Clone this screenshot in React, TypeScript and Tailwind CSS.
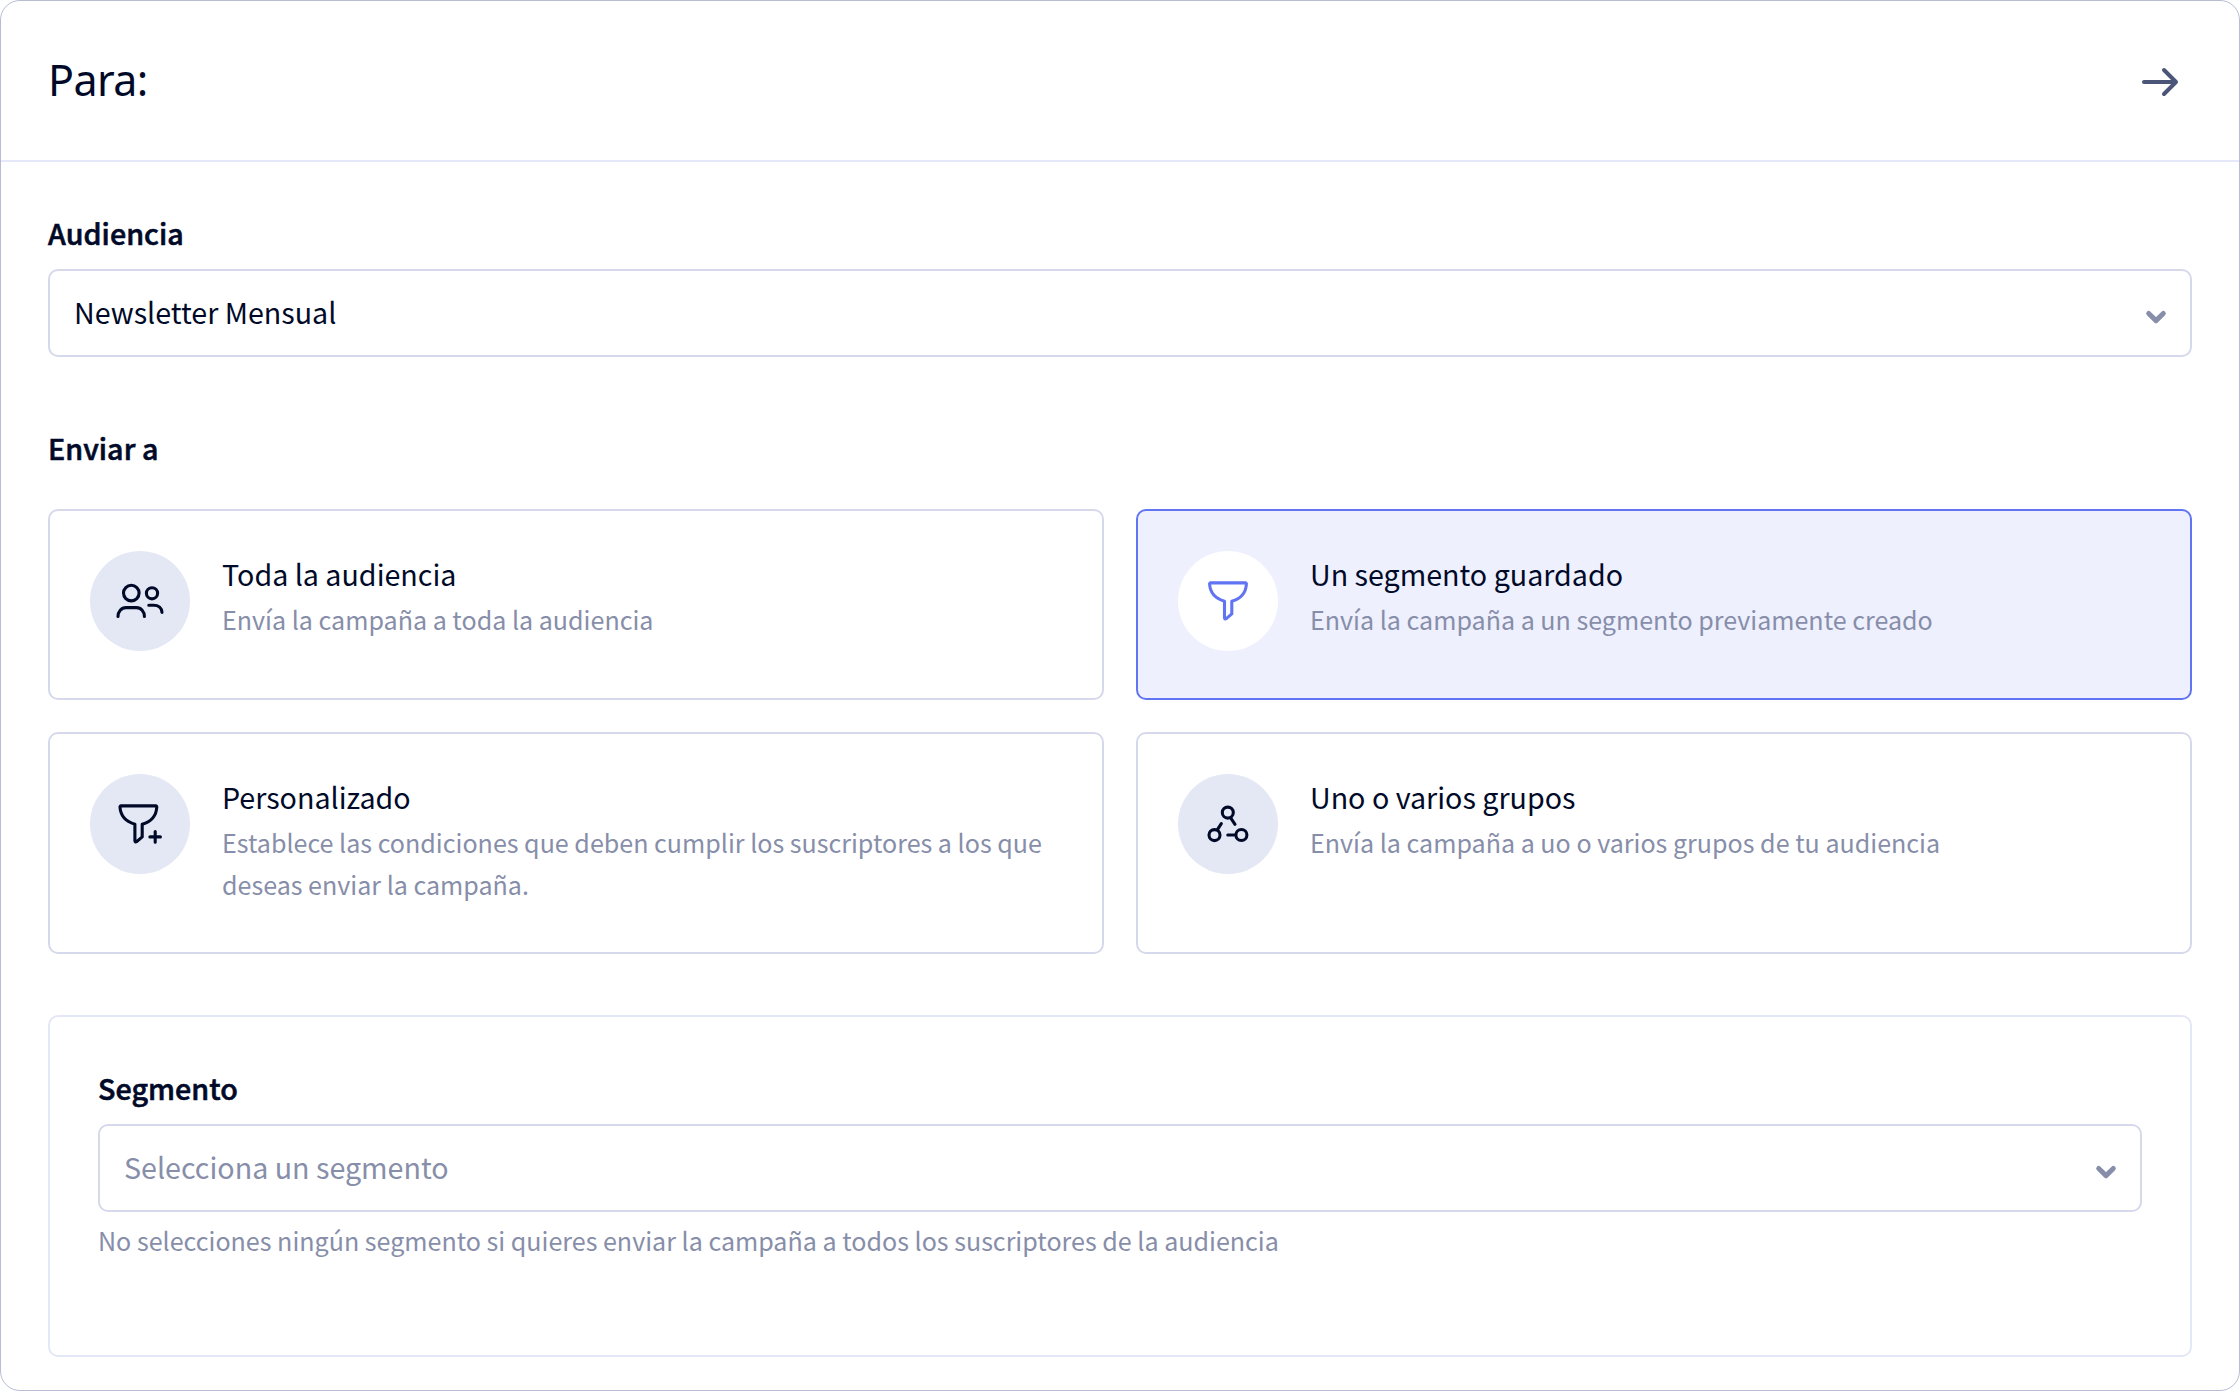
import type { ReactNode } from "react";
import clsx from "clsx";

function IconFrame({ viewBox, children }: { viewBox: string; children: ReactNode }) {
  return (
    <svg
      viewBox={viewBox}
      className="size-full"
      fill="none"
      stroke="currentColor"
      strokeWidth="3.1"
      strokeLinecap="round"
      strokeLinejoin="round"
      aria-hidden="true"
    >
      {children}
    </svg>
  );
}

const funnelPath =
  "M20.6 12.9H55.4Q56.5 12.9 56.4 14C55.9 22.5 50.5 28.8 41.8 31.3V43.9L36.3 48.7Q34.5 49.6 34.5 47.8V31.3C25.5 28.5 20 22.5 19.6 14Q19.5 12.9 20.6 12.9Z";

function UsersIcon() {
  return (
    <IconFrame viewBox="-10 -19 100 100">
      <circle cx="31.3" cy="23.1" r="7.8" />
      <circle cx="52" cy="23.3" r="5.6" />
      <path d="M18 46.5C18 41.5 21.3 37.6 26 37.6H36.4C41.1 37.6 44.4 41.5 44.4 46.5" />
      <path d="M48.8 35.2H53.6C58.6 35.2 61.8 38.2 62 42.4" />
    </IconFrame>
  );
}

function FunnelIcon() {
  return (
    <IconFrame viewBox="-12 -19 100 100">
      <path d={funnelPath} />
    </IconFrame>
  );
}

function FunnelPlusIcon() {
  return (
    <IconFrame viewBox="-10.4 -19 100 100">
      <path d={funnelPath} />
      <path d="M54.8 38.6V49.2M49.5 43.9H60" />
    </IconFrame>
  );
}

function GroupsIcon() {
  return (
    <IconFrame viewBox="-12 -21 100 100">
      <circle cx="37.8" cy="17.6" r="5.5" />
      <circle cx="24.5" cy="40.1" r="5.5" />
      <circle cx="51.4" cy="40" r="5.5" />
      <path d="M41 23.3L45 29.3M27.6 34.4L31.3 28.6M37.8 40H45.5" />
    </IconFrame>
  );
}

function Label({ children, className }: { children: ReactNode; className?: string }) {
  return (
    <div
      className={clsx(
        "h-12 text-[28.65px] leading-[48px] font-medium tracking-[0.05px] [-webkit-text-stroke:0.6px_currentColor]",
        className,
      )}
    >
      {children}
    </div>
  );
}

function Select({ value, muted }: { value: string; muted?: boolean }) {
  return (
    <button
      type="button"
      className="flex h-22 w-full items-center justify-between rounded-[10px] border-2 border-[#d5d9eb] pr-[22px] pl-6 text-left"
    >
      <span className={clsx("pb-[3px] text-[28.65px] leading-[48px]", muted && "text-[#878ea9]")}>{value}</span>
      <svg viewBox="0 0 24 16" className="mt-2 h-4 w-6" fill="none" stroke="#878ea9" strokeWidth="5" strokeLinecap="round" strokeLinejoin="round" aria-hidden="true">
        <path d="M4.7 4.5L12 11.6L19.3 4.5" />
      </svg>
    </button>
  );
}

type OptionProps = { icon: ReactNode; title: string; text: string; selected?: boolean };

function OptionCard({ icon, title, text, selected }: OptionProps) {
  return (
    <div
      className={clsx(
        "flex gap-8 rounded-[10px] border-2 px-10 pt-10",
        selected ? "border-[#6074f4] bg-[#eef0fe]" : "border-[#d5d9eb]",
      )}
    >
      <div
        className={clsx(
          "size-25 shrink-0 rounded-full",
          selected ? "bg-white text-[#6074f4]" : "bg-[#e4e8f5]",
        )}
      >
        {icon}
      </div>
      <div className="-mt-px">
        <h3 className="text-[28.65px] leading-[48px]">{title}</h3>
        <p className="text-[25.07px] leading-[42px] text-[#878ea9]">{text}</p>
      </div>
    </div>
  );
}

export default function App() {
  return (
    <main className="h-[1391px] w-[2240px] rounded-[20px] border border-[#b8bdd3] bg-white font-['Noto_Sans_CJK_SC',sans-serif] text-[#000a28]">
      <header className="flex h-[161px] items-center justify-between border-b-2 border-[#e4e8f8] pr-[59px] pl-[47px]">
        <h1 className="pb-px text-[43px] leading-[60px] tracking-[-0.6px] font-['Noto_Sans',sans-serif]">Para:</h1>
        <svg viewBox="0 0 40 40" className="mt-0.5 size-10" fill="none" stroke="#4b5578" strokeWidth="4" strokeLinecap="round" strokeLinejoin="round" aria-hidden="true">
          <path d="M4 20H35.5M24 8L36 20L24 32" />
        </svg>
      </header>
      <div className="px-[47px] pt-[47px]">
        <Label>Audiencia</Label>
        <div className="mt-3">
          <Select value="Newsletter Mensual" />
        </div>
        <Label className="mt-[67px]">Enviar a</Label>
        <div className="mt-[37px] grid grid-cols-2 grid-rows-[191px_222px] gap-8">
          <OptionCard icon={<UsersIcon />} title="Toda la audiencia" text="Envía la campaña a toda la audiencia" />
          <OptionCard icon={<FunnelIcon />} title="Un segmento guardado" text="Envía la campaña a un segmento previamente creado" selected />
          <OptionCard icon={<FunnelPlusIcon />} title="Personalizado" text="Establece las condiciones que deben cumplir los suscriptores a los que deseas enviar la campaña." />
          <OptionCard icon={<GroupsIcon />} title="Uno o varios grupos" text="Envía la campaña a uo o varios grupos de tu audiencia" />
        </div>
        <section className="mt-[61px] h-[342px] rounded-[10px] border-2 border-[#e4e8f6] px-12 pt-[47px]">
          <Label>Segmento</Label>
          <div className="mt-3">
            <Select value="Selecciona un segmento" muted />
          </div>
          <p className="mt-[7px] text-[25.07px] leading-[42px] text-[#878ea9]">
            No selecciones ningún segmento si quieres enviar la campaña a todos los suscriptores de la audiencia
          </p>
        </section>
      </div>
    </main>
  );
}
